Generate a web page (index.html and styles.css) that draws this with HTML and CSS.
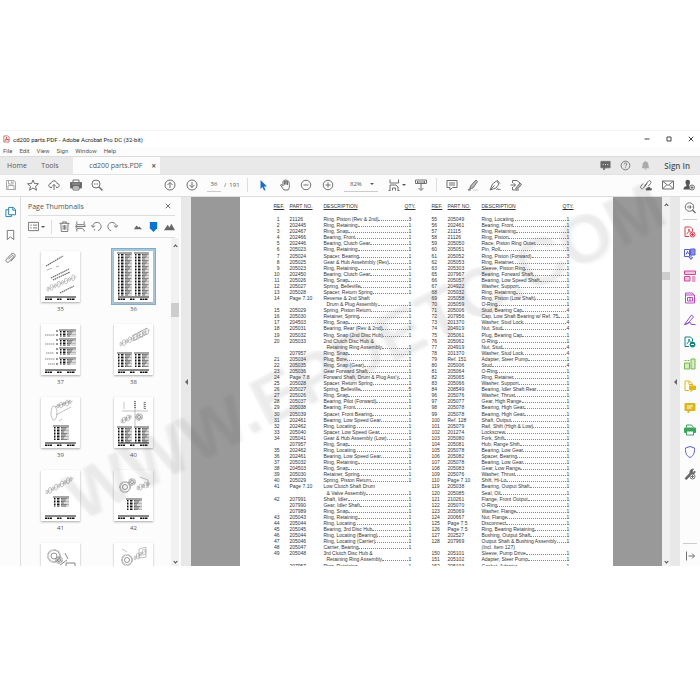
FILE: index.html
```
<!DOCTYPE html>
<html lang="en">
<head>
<meta charset="utf-8">
<title>cd200 parts.PDF - Adobe Acrobat Pro DC (32-bit)</title>
<link rel="stylesheet" href="styles.css">
</head>
<body>
<div class="app">
  <header class="titlebar">
    <svg class="logo" viewBox="0 0 16 16"><path d="M2 1h9l3 3v11H2z" fill="#fff" stroke="#b5483f" stroke-width="1.6"/><path d="M4 12c3-2 4-5 4-8 0 4 2 6 5 6-3-1-6 0-9 2z" fill="none" stroke="#b5302a" stroke-width="1.6"/></svg>
    <span class="title">cd200 parts.PDF - Adobe Acrobat Pro DC (32-bit)</span>
    <div class="winbtns">
      <button aria-label="Minimize"><svg viewBox="0 0 12 12"><path d="M1 6h10"/></svg></button>
      <button aria-label="Maximize"><svg viewBox="0 0 12 12"><path d="M2 2h8v8H2z"/></svg></button>
      <button aria-label="Close"><svg viewBox="0 0 12 12"><path d="M1.500 1.500l9 9M10.500 1.500l-9 9"/></svg></button>
    </div>
  </header>
  <nav class="menu"><a href="#">File</a><a href="#">Edit</a><a href="#">View</a><a href="#">Sign</a><a href="#">Window</a><a href="#">Help</a></nav>
  <div class="tabs">
    <button class="home">Home</button><button class="tools-tab">Tools</button>
    <div class="tab"><span>cd200 parts.PDF</span><button aria-label="Close tab">×</button></div>
    <div class="account">
      <button aria-label="Messages"><svg viewBox="0 0 24 24"><path d="M2 3h20v14H12l-4 5v-5H2z" fill="#666"/><path d="M6 10h2m3 0h2m3 0h2" stroke="#fff"/></svg></button>
      <button aria-label="Help"><svg viewBox="0 0 24 24"><circle cx="12" cy="12" r="9.500"/><path d="M9 9.500c0-4 6-4 6-.5 0 2.500-3 2.500-3 5m0 2v2"/></svg></button>
      <button aria-label="Notifications"><svg viewBox="0 0 24 24"><path d="M3 18c3-2 2-6 3-10 1-3 3-4 6-4s5 1 6 4c1 4 0 8 3 10zM9 19h6l-3 3zM11 2h2v3h-2z" fill="#aaa" stroke="none"/></svg></button>
      <button class="signin">Sign In</button>
    </div>
  </div>
  <div class="toolbar">
    <div class="group g1">
      <button aria-label="Save"><svg class="pale" viewBox="0 0 24 24"><path d="M3 3h15l3 3v15H3zM7 3v7h9V3M6 21v-8h12v8M13 5v3"/></svg></button>
      <button aria-label="Star"><svg viewBox="0 0 24 24"><path d="M12 2l3 7 8 .5-6 5 2 8-7-4.500-7 4.500 2-8-6-5L9 9z"/></svg></button>
      <button aria-label="Upload"><svg viewBox="0 0 24 24"><path d="M8 17H6c-6 0-6-8 0-8 1-7 11-7 12 0 6 0 6 8 0 8h-2M12 22V11m-4 4l4-4 4 4"/></svg></button>
      <button aria-label="Print"><svg viewBox="0 0 24 24"><path d="M6 7V2h12v5"/><path d="M1 7h22v11H1z" fill="#666"/><path d="M6 14h12v8H6z" fill="#fff"/><path d="M8 17h8m-8 2h8" stroke-width="1"/><path d="M4 10h16" stroke="#ddd" stroke-width="1"/></svg></button>
      <button aria-label="Find"><svg viewBox="0 0 24 24"><circle cx="10" cy="10" r="8"/><path d="M16 16l7 7" stroke-width="3"/><path d="M6 10h2m1 0h2m1 0h2"/></svg></button>
    </div>
    <div class="group g2">
      <button aria-label="Previous page"><svg viewBox="0 0 24 24"><circle cx="12" cy="12" r="10"/><path d="M12 18V7m-5 5l5-5 5 5"/></svg></button>
      <button aria-label="Next page"><svg viewBox="0 0 24 24"><circle cx="12" cy="12" r="10"/><path d="M12 6v11m-5-5l5 5 5-5"/></svg></button>
    </div>
    <input class="pageno" aria-label="Page number" value="36"><span class="total">/&nbsp; 191</span>
    <i class="sep"></i>
    <div class="group g3">
      <button aria-label="Select"><svg viewBox="0 0 24 24"><path d="M7 2v18l4-4 3 7 3-1-3-7h6z" fill="#1b6cc4" stroke="none"/></svg></button>
      <button aria-label="Hand"><svg viewBox="0 0 24 24"><path d="M8 22C6 19 3 16 1 12c1-2 3-1 5 2V5c0-2 3-2 3 0v6-8c0-2 3-2 3 0v8-7c0-2 3-2 3 0v8-6c0-2 3-2 3 0 0 5 3 10-2 16z" transform="translate(2 0)"/></svg></button>
      <button aria-label="Zoom out"><svg viewBox="0 0 24 24"><circle cx="12" cy="12" r="9.500"/><path d="M7 12h10"/></svg></button>
      <button aria-label="Zoom in"><svg viewBox="0 0 24 24"><circle cx="12" cy="12" r="9.500"/><path d="M7 12h10M12 7v10"/></svg></button>
    </div>
    <div class="zoom"><select aria-label="Zoom level"><option>82%</option></select><i class="caret"></i></div>
    <div class="group g4">
      <button class="drop" aria-label="Fit"><svg viewBox="0 0 24 24"><path d="M4 1v7h17V1M4 23V12h12l4 4v7M1 23h4m14 0h4M9 23v-5h6v5"/></svg><i class="caret"></i></button>
      <button aria-label="Read mode"><svg viewBox="0 0 24 24"><path d="M1 2h22v7H1zM5 4v4m3-4v4m4-4v4m4-4v4m3-4v4M12 10v12m-5-4l5 5 5-5"/></svg></button>
    </div>
    <i class="sep"></i>
    <div class="group g5">
      <button aria-label="Comment"><svg viewBox="0 0 24 24"><path d="M2 3h20v14h-9l-5 5v-5H2z"/><path d="M6 8h12M6 12h12"/></svg></button>
      <button aria-label="Highlight"><svg viewBox="0 0 24 24"><path d="M7 14L18 2l3 3-9 13-6 1zM6 19l-4 3h6" fill="#bbb"/><path d="M12 22h11" stroke="#ccc"/></svg></button>
      <button aria-label="Sign"><svg viewBox="0 0 24 24"><path d="M2 22L7 10l8-6 5 6-6 8zl9-9M16 2l6 7M15 22c2-6 4-2 3 0 2-2 3-1 5-1"/></svg></button>
      <button aria-label="Edit"><svg viewBox="0 0 24 24"><path d="M5 8V3h9l6 5M5 16v6h13M1 12h10m-4-4l4 4-4 4"/><path d="M11 19l9-11 3 3-9 10z" fill="#bbb"/></svg></button>
    </div>
    <div class="group g6">
      <button aria-label="Share link"><svg viewBox="0 0 24 24"><path d="M9 14l7-9c3-4 8 0 5 4l-4 5M14 9L7 18c-3 4-8 0-5-4l4-5"/><path d="M12 22c0-5 4-3 5-6 3 0 3 3 5 3s2 3 0 3z" fill="#555"/></svg></button>
      <button aria-label="Mail"><svg viewBox="0 0 24 24"><path d="M1 4h22v16H1zl11 9L23 4M1 20l8-8m14 8l-8-8"/></svg></button>
      <button aria-label="Add person"><svg viewBox="0 0 24 24"><path d="M5 6c0-6 9-6 9 0 0 4-2 5-2 8l3 3v4H1c0-5 2-5 6-7 0-3-2-4-2-8z" fill="#555" stroke="none"/><circle cx="18" cy="17" r="5" fill="#fff"/><path d="M15 17h6m-3-3v6"/></svg></button>
    </div>
  </div>
  <main class="work">
    <aside class="rail">
      <button aria-label="Thumbnails"><svg class="blue" viewBox="0 0 24 24"><path d="M8 2h10l5 5v11H8zM17 2v6h6M8 7H2v15h12v-4"/></svg></button>
      <button aria-label="Bookmarks"><svg viewBox="0 0 24 24"><path d="M5 2h14v20l-7-6-7 6z"/></svg></button>
      <button aria-label="Attachments"><svg viewBox="0 0 24 24"><path d="M7 15l8-8c2-2 5 1 3 3l-9 10c-4 4-9-1-6-5L13 4c5-5 12 1 8 6l-8 9"/></svg></button>
    </aside>
    <section class="panel">
      <div class="panel-head"><h2>Page Thumbnails</h2><button aria-label="Close panel"><svg viewBox="0 0 12 12"><path d="M1.500 1.500l9 9M10.500 1.500l-9 9"/></svg></button></div>
      <div class="panel-tools">
        <button class="drop" aria-label="Options"><svg viewBox="0 0 24 24"><path d="M1 3h22v18H1zM5 9h3m3 0h9M5 15h3m3 0h9"/></svg><i class="caret"></i></button>
        <i class="sep"></i>
        <button aria-label="Delete"><svg viewBox="0 0 24 24"><path d="M1 5h22M8 5V2h8v3M4 5l1 18h14l1-18M9 9v10m3-10v10m3-10v10"/></svg></button>
        <button aria-label="Split"><svg viewBox="0 0 24 24"><path d="M4 1v7h16V1M1 12h22M4 23v-7h12l4 4v3M1 8l4 4-4 4m22-8l-4 4"/></svg></button>
        <button aria-label="Rotate left"><svg viewBox="0 0 24 24"><path d="M8 21c-1-1-1-3 0-4M4 13C3 0 22 0 22 12c0 5-3 8-7 9M0 9l4 5 5-4"/></svg></button>
        <button aria-label="Rotate right"><svg viewBox="0 0 24 24"><path d="M20 13C21 0 2 0 2 12c0 5 3 8 7 9M24 9l-4 5-5-4"/></svg></button>
        <div class="sizer"><svg viewBox="0 0 12 12"><path d="M2 9l3-4 2 2 1-1 3 3z" fill="#666" stroke="none"/></svg><svg viewBox="0 0 12 12"><path d="M2 1h8v7l-4 4-4-4z" fill="#0b74d1" stroke="none"/></svg><svg viewBox="0 0 12 12"><path d="M0 10l4-6 2 3 2-4 4 7z" fill="#666" stroke="none"/></svg></div>
      </div>
      <div class="panel-list">
        <div class="thumbs" id="thumbs"></div>
        <div class="scroll s1"><i class="up"></i><i class="grip"></i><i class="down"></i></div>
      </div>
    </section>
    <div class="splitter"><i></i></div>
    <section class="canvas">
      <article class="page">
        <table id="left"><thead><tr><th>REF.</th><th>PART NO.</th><th>DESCRIPTION</th><th>QTY.</th></tr></thead><tbody></tbody></table>
        <table id="right"><thead><tr><th>REF.</th><th>PART NO.</th><th>DESCRIPTION</th><th>QTY.</th></tr></thead><tbody></tbody></table>
      </article>
    </section>
    <div class="scroll s2"><i class="up"></i><i class="grip"></i><i class="down"></i></div>
    <div class="splitter"><i></i></div>
    <aside class="tools">
      <button aria-label="Search tools"><svg viewBox="0 0 24 24"><circle cx="11" cy="10" r="8.500"/><path d="M17 16l6 6" stroke-width="3"/><path d="M6 10h2m2-3v6m3-6v6m2-3h2"/></svg></button>
      <hr>
      <div class="toollist">
        <button class="t-red" aria-label="Create PDF"><svg viewBox="0 0 24 24"><path d="M10 21H2V2h11l4 4v5M5 16c5-3 5-7 5-10 0 5 2 6 5 6"/><circle cx="17" cy="17" r="5" fill="#fff"/><path d="M14 17h6m-3-3v6"/></svg></button>
        <button class="t-indigo" aria-label="Combine"><svg viewBox="0 0 24 24"><path d="M1 3h10v14H1zM4 13l3-6 2 5"/><path d="M13 2h9v12h-9z" fill="#8d8ce0"/><path d="M14 13v9m-4-4l4 5 4-5"/></svg></button>
        <button class="t-pink" aria-label="Organize"><svg viewBox="0 0 24 24"><path d="M1 2h22v7H1zM1 13h11v9H1z" fill="#f0c6df"/><path d="M16 14h7m-7 4h7m-7 4h7"/></svg></button>
        <button class="t-magenta" aria-label="Edit PDF"><svg viewBox="0 0 24 24"><path d="M3 2h13l5 4v16H3zM3 6h17M7 11h10v7H7zm5 0v7"/></svg></button>
        <button class="t-violet" aria-label="Fill and sign"><svg viewBox="0 0 24 24"><path d="M1 21L15 2l4 4L8 18l-7 3c6 0 10-5 12-4 2 2-1 4 2 4h8"/></svg></button>
        <button class="t-teal" aria-label="Export PDF"><svg viewBox="0 0 24 24"><path d="M10 21H2V2h11l4 4v5M5 16c5-3 5-7 5-10 0 5 2 6 5 6"/><circle cx="17" cy="17" r="5" fill="#14827f"/><path d="M14 17h6" stroke="#fff"/></svg></button>
        <button class="t-lime" aria-label="Compare"><svg viewBox="0 0 24 24"><path d="M14 2h8v20h-8zM1 10h10v12H1z" fill="#d5ecc5"/><path d="M1 5h4m2 0h4"/></svg></button>
        <button class="t-yellow" aria-label="Stamp"><svg viewBox="0 0 24 24"><path d="M10 21H2V2h9l6 6v3M10 2v7h7"/><path d="M11 12h12v7h-5l-4 4v-4h-3z" fill="#dcb71c"/></svg></button>
        <button class="t-yellow" aria-label="Comment tool"><svg viewBox="0 0 24 24"><path d="M2 3h20v14H12l-4 5v-5H2z" fill="#dcb71c"/><path d="M6 8h12M6 12h9" stroke="#fff"/></svg></button>
        <button class="t-green" aria-label="Scan"><svg viewBox="0 0 24 24"><path d="M5 7V2h10l4 5"/><path d="M1 8h22v9H1z" fill="#3da35d"/><path d="M5 14h14v8H5z" fill="#fff"/></svg></button>
        <button class="t-indigo" aria-label="Protect"><svg viewBox="0 0 24 24"><path d="M12 1l9 3c0 8 0 15-9 19C3 19 3 12 3 4z"/></svg></button>
        <button aria-label="More tools"><svg viewBox="0 0 24 24"><path d="M2 21L12 10c-1-5 2-8 7-8l-3 4 2 3 4-3c1 5-3 7-7 6L5 23z" fill="#666"/><circle cx="17" cy="17" r="5" fill="#fff"/><path d="M14 17h6m-3-3v6"/></svg></button>
      </div>
      <hr class="last">
      <button class="expand" aria-label="Expand"><svg viewBox="0 0 24 24"><path d="M5 3v18M9 12h12m-5-5l5 5-5 5"/></svg></button>
    </aside>
  </main>
</div>
<div class="watermark" aria-hidden="true">WWW.EPDETC.COM</div>
<script src="app.js"></script>
</body>
</html>
```
FILE: styles.css
```
* { box-sizing: border-box; }
body { margin: 0; height: 100vh; padding: 130px 0 134px; background: #fff; font: 7px "Open Sans", sans-serif; color: #555; display: flex; overflow: hidden; position: relative; }
button, input, select { font: inherit; color: inherit; border: 0; padding: 0; margin: 0; background: none; border-radius: 0; }
button { display: flex; align-items: center; justify-content: center; }
svg { width: 12px; height: 12px; display: block; fill: none; stroke: #707070; stroke-width: 2; }
.app { flex: 1; min-width: 0; display: flex; flex-direction: column; border-top: 1px solid #f4f4f4; overflow: hidden; }
.titlebar { display: flex; align-items: center; height: 16px; padding: 0 6px 0 3px; flex: none; }
.logo { width: 7px; height: 8px; margin-right: 3px; }
.title { font: 6px Roboto, sans-serif; color: #222; }
.winbtns { margin-left: auto; display: flex; gap: 16px; }
.winbtns svg { width: 6px; height: 6px; stroke: #444; }
.menu { display: flex; gap: 7px; height: 9px; padding: 0 3px; font: 6px/8px Roboto, sans-serif; background: #fcfcfc; flex: none; }
.menu a { color: #555; text-decoration: none; }
.tabs { display: flex; height: 18px; background: #e9e9e9; border-top: 1px solid #dcdcdc; flex: none; }
.home { width: 34px; }
.tools-tab { width: 32px; margin-right: 7px; }
.tab { width: 87px; background: #fcfcfc; display: flex; align-items: center; justify-content: flex-end; gap: 9px; padding-right: 4px; }
.tab button { font-weight: 700; font-size: 8px; }
.account { margin-left: auto; display: flex; align-items: center; gap: 9px; padding-right: 10px; }
.account svg { width: 11px; height: 11px; }
.signin { font-weight: 600; margin-left: 4px; font-size: 8px; }
.toolbar { display: flex; align-items: center; height: 23px; background: #fcfcfc; border-bottom: 1px solid #ddd; border-top: 1px solid #e2e2e2; padding: 0 5px 2px; flex: none; }
.group { display: flex; justify-content: space-between; flex: none; }
.g1 { width: 98px; }
.g2 { width: 34px; margin-left: 61px; }
.pageno { width: 14px; height: 14px; margin-left: 9px; text-align: center; border-bottom: 1px solid #ccc; font-size: 6px; }
.total { width: 24px; padding-left: 3px; font-size: 6px; white-space: nowrap; }
.toolbar .total + .sep { margin-left: 2px; }
.sep { width: 1px; height: 14px; background: #ddd; flex: none; }
.g3 { width: 77px; margin-left: 9px; }
.zoom { width: 34px; height: 14px; margin: 0 10px; border-bottom: 1px solid #ccc; display: flex; align-items: center; justify-content: space-between; padding: 0 4px 0 6px; }
.zoom select { appearance: none; font-size: 6px; }
.caret { border: 2px solid transparent; border-top-color: #555; border-bottom: 0; width: 0; }
.drop { gap: 2px; }
.g4 { width: 39px; margin-right: 9px; }
.g5 { width: 76px; margin-left: 9px; }
.g6 { width: 55px; margin-left: auto; }
.pale { stroke: #aaa; }
.work { flex: 1; display: flex; min-height: 0; background: #fcfcfc; overflow: hidden; }
.rail { width: 21px; border-right: 1px solid #ddd; display: flex; flex-direction: column; align-items: center; gap: 11px; padding-top: 9px; flex: none; }
.rail svg { width: 11px; height: 12px; }
.rail .blue { stroke: #187aa5; }
.panel { width: 160px; display: flex; flex-direction: column; flex: none; min-height: 0; }
.panel-head { display: flex; justify-content: space-between; align-items: center; height: 19px; margin: 0 6px 0 7px; padding-right: 4px; border-bottom: 1px solid #ddd; flex: none; }
.panel-head h2 { margin: 0; font-size: 7px; font-weight: 400; }
.panel-head svg { width: 6px; height: 6px; }
.panel-tools { display: flex; align-items: center; gap: 5px; height: 22px; margin: 0 6px 0 7px; border-bottom: 1px solid #ddd; flex: none; }
.panel-tools svg { width: 11px; height: 11px; }
.panel-tools .drop { margin-right: 1px; }
.panel-tools .sep + button { margin-left: 2px; }
.sizer { margin-left: auto; display: flex; gap: 5px; }
.panel-list { flex: 1; display: flex; min-height: 0; overflow: hidden; }
.thumbs { display: grid; grid-template-columns: 45px 45px; column-gap: 28px; row-gap: 3px; align-content: start; padding: 10px 15px 0 17px; flex: 1; }
.thumb { margin: 0; text-align: center; height: 70px; }
.frame { padding: 3px; }
.frame svg { width: 39px; height: 51px; background: #fff; box-shadow: 0 1px 2px #aaa; stroke: #999; stroke-width: 1; }
.current .frame { background: #a9c9df; outline: 1px solid #83acc8; outline-offset: -1px; }
.thumb figcaption { line-height: 9px; font-size: 6px; }
.scroll { width: 8px; flex: none; background: #f1f1f1; display: flex; flex-direction: column; align-items: center; padding: 3px 0; }
.s1 { margin: 0 2px 0 0; }
.scroll .up, .scroll .down { width: 3px; height: 3px; border: solid #444; border-width: 1px 0 0 1px; transform: rotate(45deg); flex: none; }
.scroll .up { margin-top: 4px; }
.scroll .down { margin-top: auto; transform: rotate(225deg); }
.grip { background: #cdcdcd; width: 8px; }
.s1 .grip { height: 14px; margin-top: 55px; }
.s2 .grip { height: 8px; margin-top: 65px; }
.splitter { width: 10px; background: #e8e8e8; flex: none; display: flex; align-items: center; justify-content: center; }
.splitter i { border: 3px solid transparent; border-right-color: #666; border-left: 0; }
.canvas { flex: 1; min-width: 0; background: #999; overflow: hidden; display: flex; justify-content: center; align-items: flex-start; }
.page { width: 79%; background: #fff; display: flex; gap: 18px; padding: 6px 41px 0 33px; font: 5px/6px "Liberation Sans", sans-serif; color: #333; flex: none; }
table { border-collapse: collapse; flex: 1; width: 50%; height: 366px; table-layout: fixed; }
th { text-align: left; font-weight: 400; text-decoration: underline; padding: 0; height: 13px; vertical-align: top; white-space: nowrap; }
th:nth-child(1) { width: 16px; }
th:nth-child(2) { width: 34px; }
th:nth-child(4) { width: 9px; }
td { padding: 0; white-space: nowrap; vertical-align: middle; }
#left td:first-child { text-align: right; padding-right: 10px; }
td div { display: flex; align-items: baseline; margin-right: -3px; }
.dots { flex: 1; border-bottom: 1px dotted #888; }
td.more { padding-left: 3px; }
td:last-child { padding-left: 4px; }
.tools { width: 20px; display: flex; flex-direction: column; align-items: center; padding-top: 5px; flex: none; background: #fcfcfc; }
.tools hr { width: 14px; border: 0; border-top: 1px solid #ccc; margin: 5px 0 6px; }
.toollist { display: flex; flex-direction: column; gap: 10px; }
.tools hr.last { margin: auto 0 6px; }
.expand { margin-bottom: 4px; }
.t-red svg { stroke: #d9414f; }
.t-indigo svg { stroke: #5a5fd0; }
.t-pink svg { stroke: #d4489c; }
.t-magenta svg { stroke: #b44ac0; }
.t-violet svg { stroke: #8b52cc; }
.t-teal svg { stroke: #14827f; }
.t-lime svg { stroke: #75b947; }
.t-yellow svg { stroke: #dcb71c; }
.t-green svg { stroke: #3da35d; }
.watermark { position: absolute; left: 50%; top: 50%; transform: translate(-48%, -50%) rotate(-27deg); font: 700 68px/1 "Liberation Sans", sans-serif; color: rgba(150, 150, 150, .07); text-shadow: 2px 2px 3px rgba(0, 0, 0, .05); white-space: nowrap; pointer-events: none; }
```
FILE: app.js
```
// ref | part | description | qty ; "+" marks an indented continuation line
const left = `1|21126|Ring, Piston (Rev & 2nd)|3
2|202445|Ring, Retaining|1
3|202467|Ring, Snap|1
4|202466|Bearing, Front|1
5|202446|Bearing, Clutch Gear|1
6|205023|Ring, Retaining|1
7|205024|Spacer, Bearing|1
8|205025|Gear & Hub Assebmbly (Rev)|1
9|205023|Ring, Retaining|1
10|202450|Bearing, Clutch Gear|1
11|205026|Ring, Snap|1
12|205027|Spring, Belleville|1
13|205028|Spacer, Return Spring|1
14|Page 7.10|Reverse & 2nd Shaft|
||+Drum & Plug Assembly|1
15|205029|Spring, Piston Return|1
16|205030|Retainer, Spring|1
17|204503|Ring, Snap|1
18|205031|Bearing, Rear (Rev & 2nd)|1
19|205032|Ring, Snap (2nd Disc Hub)|1
20|205033|2nd Clutch Disc Hub &|
||+Retaining Ring Assembly|1
|207957|Ring, Snap|1
21|205034|Plug, Bore|1
22|205035|Ring, Snap (Gear)|1
23|205036|Gear Forward Shaft|1
24|Page 7.8|Forward Shaft, Drum & Plug Ass'y|1
25|205028|Spacer, Return Spring|1
26|205027|Spring, Belleville|5
27|205026|Ring, Snap|1
28|205037|Bearing, Pilot (Forward)|1
29|205038|Bearing, Front|1
30|205039|Spacer, Front Bearing|1
31|202461|Bearing, Low Speed Gear|1
32|202462|Ring, Locating|1
33|205040|Spacer, Low Speed Gear|1
34|205041|Gear & Hub Assembly (Low)|1
|207957|Ring, Snap|1
35|202462|Ring, Locating|1
36|202461|Bearing, Low Speed Gear|1
37|205032|Ring, Retaining|1
38|204503|Ring, Snap|1
39|205030|Retainer, Spring|1
40|205029|Spring, Piston Return|1
41|Page 7.10|Low Clutch Shaft Drum|
||+& Valve Assembly|1
42|207991|Shaft, Idler|1
|207990|Gear, Idler Shaft|1
|207989|Ring, Snap|1
43|205043|Ring, Retaining|1
44|205044|Ring, Locating|1
45|205045|Bearing, 3rd Disc Hub|1
46|205044|Ring, Locating (Bearing)|1
47|205046|Ring, Locating (Carrier)|1
48|205047|Carrier, Bearing|1
49|205048|3rd Clutch Disc Hub &|
||+Retaining Ring Assembly|1
|207957|Ring, Retaining|1`;
const right = `55|205049|Ring, Locating|1
56|202461|Bearing, Front|1
57|21115|Ring, Retaining|1
58|21126|Ring, Piston|1
59|205050|Race, Piston Ring Outer|1
60|205051|Pin, Roll|1
61|205052|Ring, Piston (Forward)|3
62|205053|Ring, Retainer|1
63|205303|Sleeve, Piston Ring|1
65|207967|Bearing, Forward Shaft|1
66|205057|Bearing, Low Speed Shaft|1
67|204922|Washer, Support|1
68|205032|Ring, Retaining|1
69|205058|Ring, Piston (Low Shaft)|1
70|205059|O-Ring|1
71|205006|Stud, Bearing Cap|4
72|207956|Cap, Low Shaft Bearing w/ Ref. 75|1
73|201370|Washer, Stud Lock|4
74|204919|Nut, Stud|4
75|205061|Plug, Bearing Cap|1
76|205062|O-Ring|1
77|204919|Nut, Stud|4
78|201370|Washer, Stud Lock|4
79|Ref. 151|Adapter, Steer Pump|1
80|205006|Stud|4
81|205064|O-Ring|1
82|205065|Ring, Retainer|1
83|205066|Washer, Support|1
84|208549|Bearing, Idler Shaft Rear|1
96|205076|Washer, Thrust|1
97|205077|Gear, High Range|1
98|205078|Bearing, High Gear|1
99|205078|Bearing, High Gear|1
100|Ref. 128|Shaft, Output|1
101|205079|Rail, Shift (High & Low)|1
102|201274|Lockscrew|1
103|205080|Fork, Shift|1
104|205081|Hub, Range Shift|1
105|205078|Bearing, Low Gear|1
106|205082|Spacer, Bearing|1
107|205078|Bearing, Low Gear|1
108|205083|Gear, Low Range|1
109|205076|Washer, Thrust|1
110|Page 7.10|Shift, Hi-Lo|1
119|205038|Bearing, Output Shaft|1
120|205085|Seal, Oil|1
121|210261|Flange, Front Output|1
122|205070|O-Ring|1
123|205069|Washer, Flange|1
124|200667|Nut, Flange|1
125|Page 7.5|Disconnect|1
126|Page 7.5|Ring, Bearing Retaining|1
127|202527|Bushing, Output Shaft|1
128|207969|Output Shaft & Bushing Assembly|1
||(Incl. Item 127)|
150|205101|Sleeve, Pump Drive|1
151|205102|Adapter, Steer Pump|1
152|205103|Gasket, Adapter|1`;
function fill(id, text) {
  document.querySelector('#' + id + ' tbody').innerHTML = text.split('\n').map(line => {
    const [ref, part, desc, qty] = line.replace(/&/g, '&amp;').split('|');
    const more = desc[0] === '+';
    return `<tr><td>${ref}</td><td>${part}</td><td${more ? ' class="more"' : ''}><div>${more ? desc.slice(1) : desc}${qty ? '<i class="dots"></i>' : ''}</div></td><td>${qty}</td></tr>`;
  }).join('');
}
fill('left', left);
fill('right', right);

// Miniature page drawings, 39 x 51 units
const block = (x, y, w, n, step = 1.5) => {
  let s = `<path stroke="#222" stroke-width=".8" d="M${x} ${y}h${w}"/>`;
  for (let i = 1; i <= n; i++) {
    const ly = y + i * step;
    s += `<path stroke="#111" stroke-width="1.100" d="M${x + 1} ${ly}h1.500m1.500 0h2.500"/><path stroke="#444" stroke-width=".9" d="M${x + 8} ${ly}h${3 + i * 7 % 4}"/><path stroke="#999" stroke-width=".7" d="M${x + 9} ${ly}H${x + w}"/>`;
  }
  return s;
};
const foot = '<path stroke="#111" stroke-width="1" d="M4 46h31"/><path stroke="#111" stroke-width="1.600" stroke-dasharray="2 .5" d="M4 48.200h7m5 0h5m5 0h8"/>';
const chain = (x, y, n, dx, dy) => {
  let s = `<path stroke-width=".4" d="M${x} ${y}l${n * dx} ${n * dy}"/>`;
  for (let i = 0; i < n; i++) s += `<ellipse stroke="#888" stroke-width=".5" cx="${x + i * dx}" cy="${y + i * dy}" rx="${1 + i % 2 * .6}" ry="${2 + i * 3 % 2}"/>`;
  return s;
};
const gear = (x, y, r) => `<circle cx="${x}" cy="${y}" r="${r}" stroke="#888" stroke-width="1.800" stroke-dasharray=".6 .6"/><circle cx="${x}" cy="${y}" r="${r / 2}" stroke="#777" stroke-width=".8"/>`;
const pages = {
  35: '<path stroke="#666" stroke-width="1.200" stroke-dasharray="1.500 .6" d="M5 15L22 5M10 27l18-9M12 29l17-8M19 42l14-7"/><path d="M6 19l5-2m4-1l3-1" stroke-width=".7"/>' + chain(7, 38, 8, 3.6, -1.6),
  36: block(3, 2, 15, 28) + block(20, 2, 15, 28),
  37: [6, 15, 24, 34].map(y => block(18, y, 17, 4)).join('') + '<path stroke="#888" stroke-width="1.200" stroke-dasharray="1.500 .5" d="M4 11h10M4 20h10M5 29h8M4 35h10M7 40h7"/><path stroke="#333" stroke-width="1.200" d="M15 7h2m-2 4h2m-2 5h2m-2 4h2m-2 5h2m-2 4h2m-2 6h2m-2 5h2"/>',
  38: chain(7, 20, 10, 2.9, -1.4) + '<path stroke="#777" stroke-width=".6" d="M18 12l15-8M19 17l14-7"/>' + block(3, 29, 15, 9) + block(20, 29, 15, 9),
  39: '<g stroke-width=".6"><ellipse cx="13" cy="16" rx="3" ry="7"/><path d="M14 10l15-6m-14 14l15-8M18 24l3-2"/></g>' + chain(17, 9, 5, 3, -1) + block(12, 29, 16, 9),
  40: '<path stroke="#999" stroke-width=".6" d="M21 4v25M10 5v7m20-7v7M8 14h26"/><path stroke="#777" stroke-width="1.800" stroke-dasharray="1 1" d="M21 4v8m10-7v7"/>' + gear(25, 20, 3) + chain(8, 24, 5, 2, -1) + block(3, 30, 15, 10) + block(20, 30, 15, 10),
  41: chain(6, 22, 9, 3, -1.6) + block(12, 27, 16, 6),
  42: gear(11, 17, 5) + gear(18, 12, 3) + chain(24, 18, 5, 2.5, -1) + '<path stroke-width=".6" d="M26 7l8 3v8"/>' + block(12, 29, 16, 7),
  43: gear(13, 13, 6) + gear(18, 17, 3) + '<path stroke="#666" stroke-width=".8" d="M24 10l3 6m-8 6l7-5M25 20h9v6h-9z"/>',
  44: gear(13, 17, 5) + chain(21, 15, 4, 3, -2) + '<path stroke-width=".6" d="M25 6l7-2v10l-7 1zM8 6l5 3"/>'
};
document.getElementById('thumbs').innerHTML = Object.entries(pages).map(([n, art]) =>
  `<figure class="thumb${n === '36' ? ' current' : ''}"><div class="frame"><svg viewBox="0 0 39 51">${art}${foot}</svg></div><figcaption>${n}</figcaption></figure>`).join('');
```
